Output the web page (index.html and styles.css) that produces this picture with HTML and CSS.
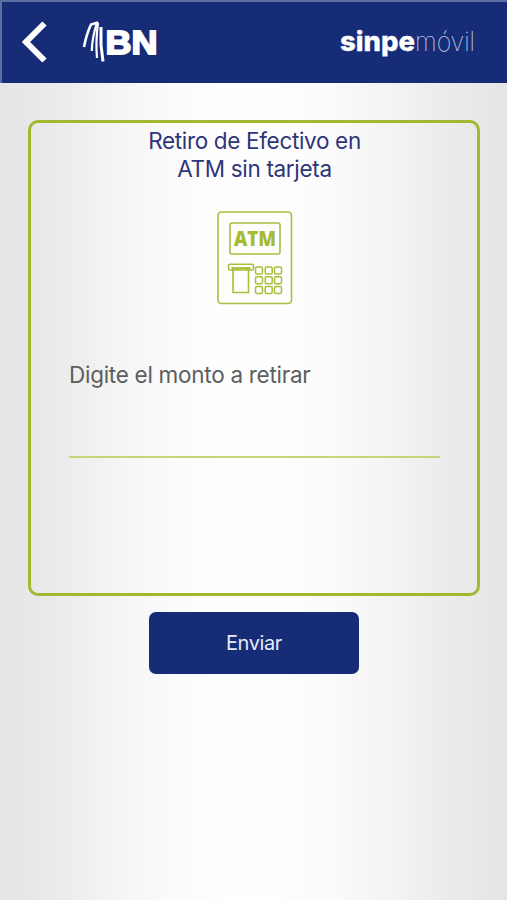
FILE: index.html
```html
<!DOCTYPE html>
<html lang="es">
<head>
<meta charset="utf-8">
<title>Retiro de Efectivo</title>
<link rel="stylesheet" href="styles.css">
</head>
<body>
<header class="bar">
  <svg class="back" width="26" height="42" viewBox="0 0 26 42"><path d="M22.500 2.500L4 21L22.500 39.500" fill="none" stroke="#fff" stroke-width="6"/></svg>
  <svg class="bank" width="78" height="44" viewBox="0 0 78 44">
    <g fill="none" stroke="#fff">
      <path d="M2 27Q4.500 14 9 4.500L16 2.500" stroke-width="2.600"/>
      <path d="M15 2.500Q10 18 9.800 31" stroke-width="2.200"/>
      <path d="M16 2.500Q13.500 22 15 38" stroke-width="2.200"/>
      <path d="M19 7V25L21 41.500" stroke-width="3"/>
    </g>
    <text class="bn" x="23.500" y="33.500" textLength="52" lengthAdjust="spacingAndGlyphs">BN</text>
  </svg>
  <svg class="sinpe" width="142" height="44" viewBox="0 0 142 44">
    <text class="sinpe-bold" x="2" y="28" textLength="75" lengthAdjust="spacingAndGlyphs">sinpe</text>
    <text class="sinpe-thin" x="77" y="28" textLength="60" lengthAdjust="spacingAndGlyphs">móvil</text>
  </svg>
</header>
<main class="content">
  <section class="card">
    <h1 class="title"><span class="line1">Retiro de Efectivo en</span><br><span class="line2">ATM sin tarjeta</span></h1>
    <svg class="atm" width="76" height="94" viewBox="0 0 76 94" fill="none" stroke="#a9bf3c" stroke-width="1.600">
      <rect x="1" y="1" width="73.500" height="91.500" rx="3.500"/>
      <rect x="13" y="12" width="50" height="31" rx="2"/>
      <text class="atm-text" x="17" y="34.500" textLength="42" lengthAdjust="spacingAndGlyphs">ATM</text>
      <rect x="11.500" y="53.200" width="25" height="5.800" rx="1.500"/>
      <path d="M14.500 57.200H33.500" stroke-width="2.200"/>
      <path d="M16 58V81.500H31.500V58"/>
      <g stroke-width="1.500">
        <rect x="38.500" y="56" width="7" height="7" rx="1.500"/><rect x="48.200" y="56" width="7" height="7" rx="1.500"/><rect x="57.500" y="56" width="7" height="7" rx="1.500"/>
        <rect x="38.500" y="65.800" width="7" height="7" rx="1.500"/><rect x="48.200" y="65.800" width="7" height="7" rx="1.500"/><rect x="57.500" y="65.800" width="7" height="7" rx="1.500"/>
        <rect x="38.500" y="75.500" width="7" height="7" rx="1.500"/><rect x="48.200" y="75.500" width="7" height="7" rx="1.500"/><rect x="57.500" y="75.500" width="7" height="7" rx="1.500"/>
      </g>
    </svg>
    <label class="label" for="amount">Digite el monto a retirar</label>
    <input class="amount" id="amount" type="text" inputmode="decimal">
  </section>
  <button class="send" type="button">Enviar</button>
</main>
</body>
</html>
```
FILE: styles.css
```css
* { box-sizing: border-box; }
body {
  margin: 0;
  height: 900px;
  overflow: hidden;
  font-family: Inter, "Liberation Sans", sans-serif;
  background: linear-gradient(90deg, #e6e6e6 0, #e7e7e7 5%, #ededed 14%, #f4f4f4 22%, #fbfbfb 34%, #fefefe 44%, #fefefe 54%, #fbfbfb 65%, #f3f3f3 78%, #ededed 86%, #e5e5e5 100%);
}
.bar {
  height: 83px;
  display: flex;
  align-items: flex-start;
  background: #162c77;
  border-top: 2px solid #5c6da2;
  border-left: 2px solid #5c6da2;
  padding: 18px 27px 0 18px;
}
.back { flex: none; margin: 1px 0 0 2px; }
.bank { flex: none; margin-left: 34px; overflow: visible; }
.bn { font: 700 33px "Liberation Sans", sans-serif; fill: #fff; stroke: #fff; stroke-width: 1.8px; }
.sinpe { flex: none; margin: 2.5px 0 0 auto; overflow: visible; }
.sinpe-bold { font: 800 27px Inter, sans-serif; fill: #fff; stroke: #fff; stroke-width: 0.3px; }
.sinpe-thin { font: 100 27px Inter, sans-serif; fill: #d0d7e9; stroke: #d0d7e9; stroke-width: 0.2px; }
.content { display: flex; flex-direction: column; align-items: center; padding: 37px 27px 0 28px; }
.card {
  width: 452px;
  height: 476px;
  border: 3px solid #a3b82f;
  border-radius: 10px;
  display: flex;
  flex-direction: column;
  align-items: center;
  padding: 4px 37px 0 38px;
}
.title { margin: 0; color: #2d3679; font-weight: 400; font-size: 22.5px; line-height: 28px; text-align: center; letter-spacing: -0.33px; }
.atm { display: block; margin-top: 27.500px; }
.atm-text { font: 800 21px "Open Sans", sans-serif; fill: #a5bb32; stroke: none; }
.label { align-self: flex-start; margin-top: 56px; color: #5c5d5f; font-size: 22.5px; line-height: 28px; letter-spacing: -0.28px; }
.amount { width: 371px; height: 69px; margin: 0; padding: 0; border: 0; border-bottom: 2px solid #c5d57c; background: transparent; outline: 0; font: inherit; font-size: 22px; }
.send { width: 210px; height: 62px; margin-top: 16px; border: 0; border-radius: 7px; background: #162c77; color: #e4eaf7; font: 400 20px Inter, sans-serif; letter-spacing: -0.4px; }
```
